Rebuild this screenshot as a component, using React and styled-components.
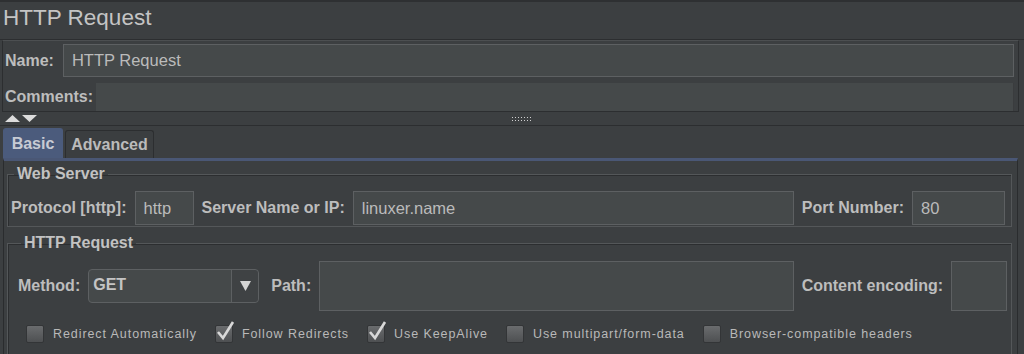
import React from "react";
import styled, { createGlobalStyle } from "styled-components";

const Global = createGlobalStyle`
  html, body { margin: 0; padding: 0; background: #3c3f41; }
  body { font-family: "Liberation Sans", Arial, sans-serif; color: #bbbbbb; }
  * { box-sizing: border-box; }
`;

const Page = styled.div`
  width: 1024px;
  height: 354px;
  overflow: hidden;
  background: #3c3f41;
  border-top: 2px solid #2e3032;
`;

const Title = styled.div`
  height: 38px;
  padding: 3px 0 0 3px;
  font-size: 22.5px;
  color: #c4c4c4;
  border-bottom: 1px solid #2c2e30;
`;

const NamePanel = styled.div`
  margin: 0 5px 0 2px;
  border: 1px solid #2c2e30;
  border-top: 1px solid #4c4f51;
  padding: 3px 4px 0 2px;
  height: 72px;
`;

const Row = styled.div`
  display: flex;
  align-items: center;
  gap: ${p => p.gap || 8}px;
  height: ${p => p.h}px;
  margin-top: ${p => p.mt || 0}px;
`;

const Label = styled.span`
  font-weight: bold;
  font-size: 16px;
  color: #bdbdbd;
  white-space: nowrap;
  margin-left: ${p => p.ml || 0}px;
`;

const Input = styled.div`
  flex: ${p => (p.w ? "none" : "1")};
  width: ${p => (p.w ? p.w + "px" : "auto")};
  height: ${p => p.h || 34}px;
  background: #45494a;
  border: 1px solid #5d6062;
  font-size: 16.5px;
  color: #bbbbbb;
  padding: 0 8px;
  display: flex;
  align-items: center;
`;

const Area = styled.div`
  flex: 1;
  height: 100%;
  background: #45494a;
  border-right: 1px solid #3a3c3e;
`;

const Splitter = styled.div`
  height: 14px;
  display: flex;
  align-items: center;
  position: relative;
  border-bottom: 1px solid #2c2e30;
  padding-left: 5px;
`;

const Grip = styled.div`
  position: absolute;
  left: 511px;
  top: 4px;
  width: 20px;
  height: 5px;
  background-image: radial-gradient(circle, #d0d0d0 0.8px, transparent 1px);
  background-size: 3px 3px;
`;

const Tabs = styled.div`
  display: flex;
  align-items: flex-end;
  margin: 2px 0 0 3px;
  height: 30px;
`;

const Tab = styled.div`
  width: ${p => p.w}px;
  height: ${p => (p.active ? 30 : 28)}px;
  margin-right: 2px;
  display: flex;
  align-items: center;
  justify-content: center;
  font-weight: bold;
  font-size: 16px;
  border-radius: 3px 3px 0 0;
  background: ${p => (p.active ? "#4b5b7c" : "#3b3e40")};
  color: ${p => (p.active ? "#c7cbd4" : "#bbbbbb")};
  border: 1px solid ${p => (p.active ? "#4b5b7c" : "#2c2e30")};
  border-bottom: none;
`;

const Content = styled.div`
  margin: 0 6px 0 3px;
  border-top: 3px solid #4a5775;
  border-right: 1px solid #2a2c2e;
  border-left: 1px solid #2a2c2e;
  height: 200px;
  padding: 4px 5px 0 3px;
`;

const Fieldset = styled.fieldset`
  margin: 0 0 ${p => p.mb || 0}px 0;
  border: 1px solid #545759;
  border-radius: 0;
  padding: 0 ${p => p.pr || 6}px 0 ${p => p.pl || 3}px;
  height: ${p => p.h}px;
  box-shadow: inset 1px 1px 0 #2c2e30;
`;

const Legend = styled.legend`
  font-weight: bold;
  font-size: 16px;
  color: #c2c2c2;
  padding: 0 3px;
  margin-left: 3px;
`;

const ComboBox = styled.div`
  width: 171px;
  height: 34px;
  display: flex;
  border: 1px solid #5d6062;
  border-radius: 4px;
  background: #45494a;
  font-weight: bold;
  font-size: 16px;
  color: #c4c4c4;
`;

const ComboText = styled.div`
  flex: 1;
  padding: 0 0 3px 4px;
  display: flex;
  align-items: center;
`;

const ComboArrow = styled.div`
  width: 27px;
  border-left: 1px solid #5d6062;
  display: flex;
  align-items: center;
  justify-content: center;
  background: #3f4244;
  border-radius: 0 4px 4px 0;
`;

const Checks = styled.div`
  display: flex;
  align-items: center;
  height: 24px;
  margin-top: 11px;
  padding-left: 8px;
`;

const Check = styled.div`
  display: flex;
  align-items: center;
  margin-right: ${p => p.mr}px;
  font-size: 12.5px;
  letter-spacing: 0.92px;
  color: #b9b9b9;
`;

const Box = styled.div`
  width: 18px;
  height: 18px;
  margin-right: 9px;
  background: linear-gradient(#6a6c6e, #4e5052);
  border: 1px solid #333537;
  border-radius: 2px;
  position: relative;
`;

const Tick = () => (
  <svg width="22" height="22" viewBox="0 0 22 22" style={{ position: "absolute", left: -1, top: -6 }}>
    <path d="M3 12 L8 18 L18 2" fill="none" stroke="#d8d8d8" strokeWidth="2.6" />
  </svg>
);

const Arrows = () => (
  <svg width="34" height="9" viewBox="0 0 34 9">
    <polygon points="0,8 7.5,1 15,8" fill="#dcdcdc" />
    <polygon points="17,1 32,1 24.5,8" fill="#dcdcdc" />
  </svg>
);

const checks = [
  ["Redirect Automatically", false, 18],
  ["Follow Redirects", true, 18],
  ["Use KeepAlive", true, 18],
  ["Use multipart/form-data", false, 18],
  ["Browser-compatible headers", false, 0],
];

export default function App() {
  return (
    <Page>
      <Global />
      <Title>HTTP Request</Title>
      <NamePanel>
        <Row h={33} gap={9}>
          <Label>Name:</Label>
          <Input h={33}>HTTP Request</Input>
        </Row>
        <Row h={28} gap={3} mt={6}>
          <Label>Comments:</Label>
          <Area />
        </Row>
      </NamePanel>
      <Splitter>
        <Arrows />
        <Grip />
      </Splitter>
      <Tabs>
        <Tab active w={60}>Basic</Tab>
        <Tab w={89}>Advanced</Tab>
      </Tabs>
      <Content>
        <Fieldset h={62} mb={7}>
          <Legend>Web Server</Legend>
          <Row h={34} gap={8} mt={8}>
            <Label>Protocol [http]:</Label>
            <Input w={59}>http</Input>
            <Label>Server Name or IP:</Label>
            <Input>linuxer.name</Input>
            <Label>Port Number:</Label>
            <Input w={93}>80</Input>
          </Row>
        </Fieldset>
        <Fieldset h={130} pl={10} pr={4}>
          <Legend>HTTP Request</Legend>
          <Row h={50} gap={8} mt={9}>
            <Label>Method:</Label>
            <ComboBox>
              <ComboText>GET</ComboText>
              <ComboArrow>
                <svg width="11" height="10" viewBox="0 0 11 10">
                  <polygon points="0,0 11,0 5.5,10" fill="#d4d4d4" />
                </svg>
              </ComboArrow>
            </ComboBox>
            <Label ml={4}>Path:</Label>
            <Input h={50} />
            <Label>Content encoding:</Label>
            <Input w={56} h={50} />
          </Row>
          <Checks>
            {checks.map(([t, on, mr]) => (
              <Check key={t} mr={mr}>
                <Box>{on && <Tick />}</Box>
                {t}
              </Check>
            ))}
          </Checks>
        </Fieldset>
      </Content>
    </Page>
  );
}
